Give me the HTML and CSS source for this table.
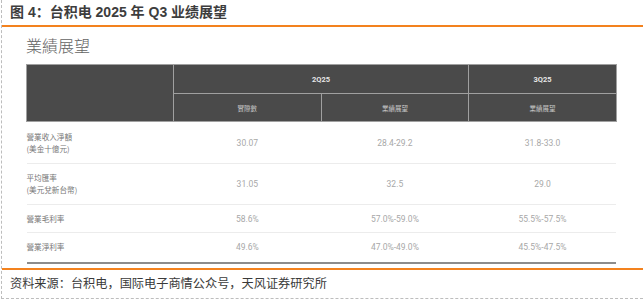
FILE: index.html
```html
<!DOCTYPE html>
<html lang="zh-CN">
<head>
<meta charset="utf-8">
<title>图 4：台积电 2025 年 Q3 业绩展望</title>
<link rel="stylesheet" href="styles.css">
</head>
<body>
<div class="figure">
  <div class="fig-title">图 4：台积电 2025 年 Q3 业绩展望</div>
  <div class="fig-body">
    <div class="sheet-title">業績展望</div>
    <table class="guidance">
      <colgroup>
        <col class="c-label"><col class="c-val"><col class="c-val"><col class="c-val">
      </colgroup>
      <thead>
        <tr class="h1">
          <th rowspan="2"></th>
          <th colspan="2">2Q25</th>
          <th>3Q25</th>
        </tr>
        <tr class="h2">
          <th>實際數</th>
          <th>業績展望</th>
          <th>業績展望</th>
        </tr>
      </thead>
      <tbody>
        <tr class="r-tall">
          <td class="lbl">營業收入淨額<br>(美金十億元)</td>
          <td>30.07</td><td>28.4-29.2</td><td>31.8-33.0</td>
        </tr>
        <tr class="r-tall2">
          <td class="lbl">平均匯率<br>(美元兌新台幣)</td>
          <td>31.05</td><td>32.5</td><td>29.0</td>
        </tr>
        <tr class="r-short">
          <td class="lbl">營業毛利率</td>
          <td>58.6%</td><td>57.0%-59.0%</td><td>55.5%-57.5%</td>
        </tr>
        <tr class="r-short2">
          <td class="lbl">營業淨利率</td>
          <td>49.6%</td><td>47.0%-49.0%</td><td>45.5%-47.5%</td>
        </tr>
      </tbody>
    </table>
  </div>
  <div class="source">资料来源：台积电，国际电子商情公众号，天风证券研究所</div>
</div>
</body>
</html>
```
FILE: styles.css
```css
* { box-sizing: border-box; }
html, body { margin: 0; padding: 0; background: #fff; }
body { font-family: "Noto Sans CJK SC", "Noto Sans", sans-serif; }

.figure {
  width: 642px;
  height: 299px;
  margin-left: 1px;
  border-left: 1px dashed #bdbdbd;
  border-bottom: 1px dashed #bdbdbd;
  display: flex;
  flex-direction: column;
}

.fig-title {
  height: 27px;
  line-height: 25px;
  padding-left: 8px;
  border-bottom: 2px solid #f3821e;
  font-family: "Liberation Sans", "Noto Sans CJK SC", sans-serif;
  font-weight: bold;
  font-size: 14px;
  color: #3d3d3d;
}

.fig-body {
  height: 243px;
  padding: 8px 0 0 24px;
  border-bottom: 2px solid #f3821e;
}

.sheet-title {
  font-family: "Noto Sans CJK TC", sans-serif;
  font-weight: 300;
  font-size: 16px;
  line-height: 20px;
  color: #636363;
  margin-bottom: 9px;
}

.guidance {
  width: 590px;
  border-collapse: collapse;
  table-layout: fixed;
  font-family: Roboto, "Noto Sans CJK TC", sans-serif;
}
.c-label { width: 147px; }
.c-val { width: 147.6px; }

.guidance th {
  background: #4a4a4a;
  border: 1px solid #a0a0a0;
  padding: 0;
  font-weight: bold;
  color: #e6e6e6;
  text-align: center;
}
.h1 th { height: 29px; font-size: 7.5px; }
.h2 th { height: 28px; font-size: 6.5px; font-weight: normal; color: #c8c8c8; font-family: "Noto Sans CJK TC", sans-serif; }

.guidance td {
  padding: 0;
  text-align: center;
  font-size: 8.5px;
  color: #a8a8a8;
  border-bottom: 1px solid #ececec;
}
.guidance td.lbl {
  text-align: left;
  font-family: "Noto Sans CJK TC", sans-serif;
  font-size: 7.6px;
  line-height: 12px;
  color: #777;
}
.r-tall td { height: 42px; }
.r-tall2 td { height: 41px; }
.r-short td { height: 28px; }
.guidance .r-short2 td { height: 30px; border-bottom: 2px solid #8c8c8c; }

.source {
  padding-left: 8px;
  line-height: 26px;
  font-size: 12.2px;
  color: #3a3a3a;
}
```
